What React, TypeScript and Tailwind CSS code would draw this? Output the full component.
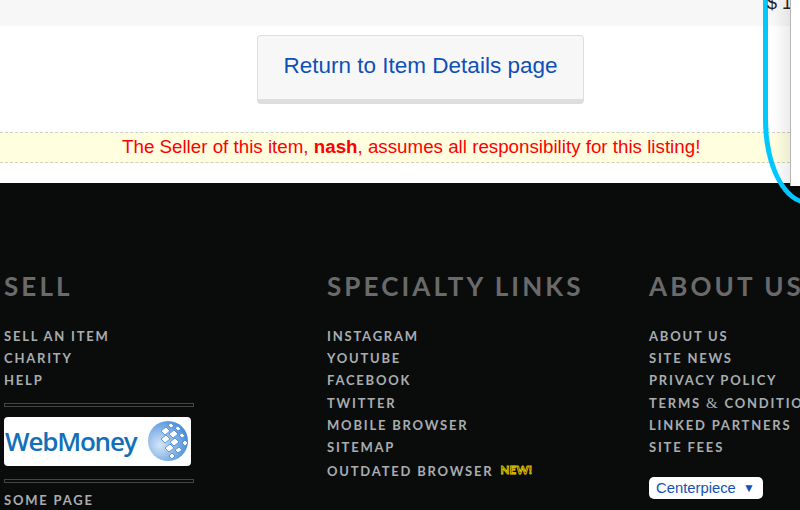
const sell = ["SELL AN ITEM", "CHARITY", "HELP"];
const specialty = ["INSTAGRAM", "YOUTUBE", "FACEBOOK", "TWITTER", "MOBILE BROWSER", "SITEMAP"];

function FooterLink({ children }: { children: React.ReactNode }) {
  return (
    <a className="block h-[22.2px] text-[13px] leading-[22px] font-bold tracking-[1.8px] whitespace-nowrap text-[#a9adb0]">
      {children}
    </a>
  );
}

function Heading({ children }: { children: React.ReactNode }) {
  return (
    <h3 className="h-[36px] text-[26px] leading-[36px] font-bold tracking-[3.1px] whitespace-nowrap text-[#6a6a6a]">
      {children}
    </h3>
  );
}

function Rule() {
  return <div className="h-[4px] w-[190px] border border-[#454545]" />;
}

function WebMoneyLogo() {
  return (
    <div className="flex h-[49px] w-[187px] items-center justify-between rounded-[4px] bg-white pr-[1px] pl-[1px]">
      <span className="font-['Open_Sans',sans-serif] text-[26px] leading-none font-semibold tracking-[-1.2px] text-[#1270b8]">WebMoney</span>
      <svg width="42" height="42" viewBox="0 0 42 42">
        <defs>
          <radialGradient id="wm" cx="30%" cy="60%" r="75%">
            <stop offset="0" stopColor="#d6e6f8" />
            <stop offset="1" stopColor="#3f88d8" />
          </radialGradient>
        </defs>
        <circle cx="20" cy="21" r="20" fill="url(#wm)" />
        <g fill="#fff" stroke="#4f90d8" strokeWidth="0.9">
          <path d="M13 11l5-4 4 4-5 4z" />
          <path d="M20 5l3-2 3 3-3 2z" />
          <path d="M27 8l3-2 3 3-3 2z" />
          <path d="M21 14l5-4 4 4-5 4z" />
          <path d="M31 15l3-2 3 3-3 2z" />
          <path d="M13 19l5-4 4 4-5 4z" />
          <path d="M22 22l5-4 4 4-5 4z" />
          <path d="M34 23l3-3 3 3-3 3z" />
          <path d="M17 28l5-4 4 4-5 4z" />
          <path d="M27 30l4-3 3 3-4 3z" />
          <path d="M21 36l3-3 3 3-3 3z" />
        </g>
      </svg>
    </div>
  );
}

export default function App() {
  return (
    <div className="relative h-[510px] w-[800px] overflow-hidden bg-white font-['Liberation_Sans',Arial,sans-serif]">
      <div className="h-[26px] bg-[#f7f7f7]" />

      <div className="ml-[257px] pt-[9px]">
        <a className="flex h-[69px] w-[327px] items-center justify-center rounded-[4px] border border-b-[5px] border-[#dedede] bg-[#f7f7f8] pb-[3px] text-[22.5px] text-[#0f4fb8]">
          Return to Item Details page
        </a>
      </div>

      <div className="mt-[28px] h-[31px] w-[790px] border-y border-dashed border-[#cfcfc4] bg-[#ffffe0] pl-[122px] text-[18.75px] leading-[27px] whitespace-nowrap text-[#ff0000]">
        The Seller of this item, <b>nash</b>, assumes all responsibility for this listing!
      </div>

      <div className="h-[20px]" />

      <footer className="flex h-[327px] bg-[#0a0c0c] pt-[85px] pl-[4px] font-['Lato',sans-serif]">
        <div className="w-[323px] shrink-0">
          <Heading>SELL</Heading>
          <div className="mt-[21px]">
            {sell.map((s) => (
              <FooterLink key={s}>{s}</FooterLink>
            ))}
          </div>
          <div className="mt-[11px]"><Rule /></div>
          <div className="mt-[10px]"><WebMoneyLogo /></div>
          <div className="mt-[13px]"><Rule /></div>
          <div className="mt-[6px]"><FooterLink>SOME PAGE</FooterLink></div>
        </div>

        <div className="w-[322px] shrink-0">
          <Heading>SPECIALTY LINKS</Heading>
          <div className="mt-[21px]">
            {specialty.map((s) => (
              <FooterLink key={s}>{s}</FooterLink>
            ))}
            <div className="mt-[2px] flex items-start">
              <FooterLink>OUTDATED BROWSER</FooterLink>
              <span className="mt-[3px] ml-[7px] text-[11.5px] leading-[14px] font-bold tracking-[0.3px] text-[#3a3000] [-webkit-text-stroke:0.8px_#f0cc00]">
                NEW!
              </span>
            </div>
          </div>
        </div>

        <div className="w-[160px] shrink-0">
          <Heading>ABOUT US</Heading>
          <div className="mt-[21px]">
            <FooterLink>ABOUT US</FooterLink>
            <FooterLink>SITE NEWS</FooterLink>
            <FooterLink>PRIVACY POLICY</FooterLink>
            <FooterLink>
              TERMS <span className="font-['Liberation_Serif',serif] text-[15px] font-normal">&amp;</span> CONDITIONS
            </FooterLink>
            <FooterLink>LINKED PARTNERS</FooterLink>
            <FooterLink>SITE FEES</FooterLink>
          </div>
          <div className="mt-[19px] flex h-[22px] w-[114px] items-center justify-between rounded-[5px] bg-white pr-[8px] pl-[7px] font-['Liberation_Sans',sans-serif] text-[14.8px] text-[#1450b8]">
            <span>Centerpiece</span>
            <span className="text-[12px]">▼</span>
          </div>
        </div>
      </footer>

      {/* slide-out panel lying over the page */}
      <div className="absolute top-0 left-[790px] h-[186px] w-[10px] border-l border-[#b5b5b5] bg-white" />
      <div className="absolute top-0 left-[772px] h-[183px] w-[18px] bg-gradient-to-r from-transparent to-[#00000012]" />
      <div className="absolute top-[-200px] left-[763px] h-[405px] w-[120px] rounded-bl-[45px_85px] border-b-[5px] border-l-[5px] border-[#00c8ff]" />
      <div className="absolute top-[-10px] left-[767px] w-[23px] overflow-hidden text-[18px] font-medium whitespace-nowrap text-[#222]">$ 10</div>
    </div>
  );
}
